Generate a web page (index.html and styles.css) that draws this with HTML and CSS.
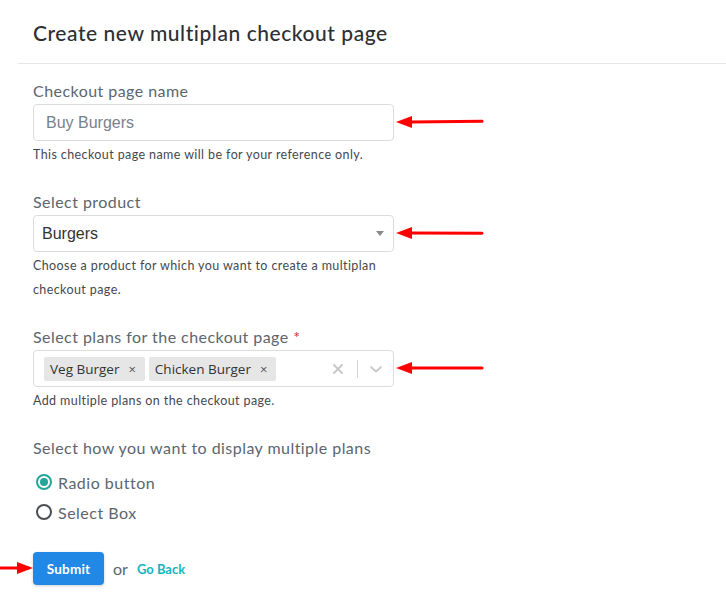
FILE: index.html
```html
<!DOCTYPE html>
<html>
<head>
<meta charset="utf-8">
<link rel="stylesheet" href="styles.css">
</head>
<body>
<div class="page">
  <div class="header">
    <h1 class="title">Create new multiplan checkout page</h1>
  </div>
  <form class="form">
    <div class="field">
      <label class="label">Checkout page name</label>
      <div class="control">
        <div class="input placeholder">Buy Burgers</div>
        <svg class="arrow arrow-left" width="90" height="14" viewBox="0 0 90 14"><path d="M16 7 L87 6.2" stroke="#f00" stroke-width="3" stroke-linecap="round" fill="none"/><path d="M1 7 L17 1 L17 13 Z" fill="#f00"/></svg>
      </div>
      <p class="help">This checkout page name will be for your reference only.</p>
    </div>

    <div class="field">
      <label class="label">Select product</label>
      <div class="control">
        <div class="input select">
          <span>Burgers</span>
          <span class="caret"></span>
        </div>
        <svg class="arrow arrow-left" width="90" height="14" viewBox="0 0 90 14"><path d="M16 7 L87 7.3" stroke="#f00" stroke-width="3" stroke-linecap="round" fill="none"/><path d="M1 7 L17 1 L17 13 Z" fill="#f00"/></svg>
      </div>
      <p class="help">Choose a product for which you want to create a multiplan checkout page.</p>
    </div>

    <div class="field">
      <label class="label">Select plans for the checkout page <span class="req">*</span></label>
      <div class="control">
        <div class="input multi">
          <div class="tags">
            <span class="tag">Veg Burger <span class="tag-x">×</span></span>
            <span class="tag">Chicken Burger <span class="tag-x">×</span></span>
          </div>
          <div class="indicators">
            <svg class="clear" width="12" height="12" viewBox="0 0 12 12"><path d="M2 2 L10 10 M10 2 L2 10" stroke="#c8c8c8" stroke-width="2" stroke-linecap="round"/></svg>
            <span class="sep"></span>
            <svg class="chev" width="14" height="10" viewBox="0 0 14 10"><path d="M2 3 L7 7.5 L12 3" stroke="#c8c8c8" stroke-width="1.8" fill="none" stroke-linecap="round" stroke-linejoin="round"/></svg>
          </div>
        </div>
        <svg class="arrow arrow-left" width="90" height="14" viewBox="0 0 90 14"><path d="M16 7 L87 7" stroke="#f00" stroke-width="3" stroke-linecap="round" fill="none"/><path d="M1 7 L17 1 L17 13 Z" fill="#f00"/></svg>
      </div>
      <p class="help">Add multiple plans on the checkout page.</p>
    </div>

    <div class="field">
      <label class="label">Select how you want to display multiple plans</label>
      <div class="radios">
        <div class="radio"><span class="dot checked"></span>Radio button</div>
        <div class="radio"><span class="dot"></span>Select Box</div>
      </div>
    </div>

    <div class="actions">
      <svg class="arrow arrow-right" width="34" height="14" viewBox="0 0 34 14"><path d="M0 7 L20 7" stroke="#f00" stroke-width="3" fill="none"/><path d="M33 7 L17 1 L17 13 Z" fill="#f00"/></svg>
      <button type="button" class="btn">Submit</button>
      <span class="or">or</span>
      <a class="back">Go Back</a>
    </div>
  </form>
</div>
</body>
</html>
```
FILE: styles.css
```css
* { box-sizing: border-box; }
html, body { margin: 0; padding: 0; background: #fff; }
body { font-family: Lato, "Open Sans", sans-serif; width: 726px; height: 604px; overflow: hidden; }
.page { position: relative; }
.header {
  margin-left: 18px;
  height: 64px;
  padding: 20px 0 0 15px;
  border-bottom: 1px solid #e4e6e8;
}
.title {
  margin: 0;
  font-size: 21px;
  line-height: 26px;
  font-weight: 500;
  color: #2d3033;
  letter-spacing: 0.55px;
}
.form { padding: 17px 0 0 33px; }
.field { margin-bottom: 25px; }
.label {
  display: block;
  font-size: 16px;
  line-height: 20px;
  color: #5b666e;
  letter-spacing: 0.45px;
  margin-bottom: 3px;
}
.req { color: #d0303a; }
.control { position: relative; width: 361px; }
.input {
  width: 361px;
  height: 37px;
  border: 1px solid #dcdcdc;
  border-radius: 4px;
  display: flex;
  align-items: center;
  font-family: "Liberation Sans", Arial, sans-serif;
  font-size: 16px;
}
.placeholder { padding-left: 12px; color: #77828b; }
.select { padding: 0 8px 0 8px; color: #333; justify-content: space-between; }
.caret {
  width: 0; height: 0;
  border-left: 4px solid transparent;
  border-right: 4px solid transparent;
  border-top: 5px solid #888;
  margin-right: 1px;
}
.multi { justify-content: space-between; padding: 0 0 0 10px; }
.tags { display: flex; gap: 4px; }
.tag {
  background: #e6e6e6;
  border-radius: 2px;
  height: 24px;
  display: flex;
  align-items: center;
  padding: 0 9px 0 6px;
  font-family: "Open Sans", sans-serif;
  font-size: 13.5px;
  color: #333;
}
.tag-x { font-size: 13px; color: #555; margin-left: 9px; }
.indicators { display: flex; align-items: center; height: 100%; }
.clear { margin-right: 13px; }
.sep { width: 1px; height: 18px; background: #d4d4d4; }
.chev { margin: 0 10px 0 11px; }
.help {
  margin: 2px 0 0;
  font-size: 12.5px;
  line-height: 24px;
  letter-spacing: 0.4px;
  color: #45494e;
  width: 361px;
}
.arrow { position: absolute; }
.arrow-left { left: 362px; top: 11px; }
.radios { margin-top: 9px; }
.radio {
  display: flex;
  align-items: center;
  height: 30px;
  font-size: 16px;
  letter-spacing: 0.5px;
  color: #5b666e;
}
.dot {
  width: 16px; height: 16px;
  border-radius: 50%;
  border: 2px solid #4a4f54;
  margin: 0 6px 0 3px;
  position: relative;
}
.dot.checked { border-color: #26a69a; }
.dot.checked::after {
  content: "";
  position: absolute;
  left: 2px; top: 2px;
  width: 8px; height: 8px;
  border-radius: 50%;
  background: #26a69a;
}
.actions {
  position: relative;
  display: flex;
  align-items: center;
  margin-top: 0;
}
.arrow-right { left: -33px; top: 9px; }
.btn {
  height: 33px;
  width: 71px;
  border: none;
  border-radius: 4px;
  background: #2189e5;
  color: #fff;
  font-family: Lato, sans-serif;
  font-weight: 700;
  font-size: 13.5px;
  letter-spacing: 0.2px;
  box-shadow: 0 1px 3px rgba(0,0,0,0.2);
}
.or { margin-left: 9px; font-size: 16px; color: #5b666e; }
.back { margin-left: 9px; font-size: 13px; font-weight: 700; color: #17b4c2; }
```
